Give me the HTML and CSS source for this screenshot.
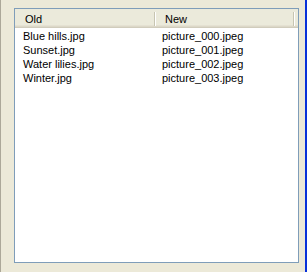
FILE: index.html
```html
<!DOCTYPE html>
<html>
<head>
<meta charset="utf-8">
<link rel="stylesheet" href="styles.css">
</head>
<body>
<div class="window">
  <div class="edge"></div>
  <div class="content">
    <div class="list">
      <div class="header">
        <div class="hcell col-old">Old</div>
        <span class="sep"></span>
        <div class="hcell col-new">New</div>
        <span class="sep"></span>
        <div class="hfill"></div>
      </div>
      <div class="rows">
        <div class="row"><span class="cell col-old">Blue hills.jpg</span><span class="cell col-new">picture_000.jpeg</span></div>
        <div class="row"><span class="cell col-old">Sunset.jpg</span><span class="cell col-new">picture_001.jpeg</span></div>
        <div class="row"><span class="cell col-old">Water lilies.jpg</span><span class="cell col-new">picture_002.jpeg</span></div>
        <div class="row"><span class="cell col-old">Winter.jpg</span><span class="cell col-new">picture_003.jpeg</span></div>
      </div>
    </div>
  </div>
  <div class="frame"></div>
</div>
</body>
</html>
```
FILE: styles.css
```css
html, body {
  margin: 0;
  padding: 0;
  width: 307px;
  height: 272px;
  overflow: hidden;
  background: #ece9d8;
  font-family: "Liberation Sans", Arial, sans-serif;
  font-size: 11px;
  color: #000;
}
.window {
  display: flex;
  width: 307px;
  height: 272px;
}
.edge {
  width: 1px;
  background: #aca899;
  flex: none;
}
.content {
  flex: 1;
  padding: 8px 6px 0 13px;
}
.frame {
  width: 2px;
  background: #0831d9;
  flex: none;
}
.list {
  width: 283px;
  height: 253px;
  border: 1px solid #7f9db9;
  background: #fff;
  display: flex;
  flex-direction: column;
}
.header {
  display: flex;
  height: 18px;
  background: #ebeadb;
  border-bottom: 1px solid #d0ccbc;
  box-shadow: inset 0 -1px 0 #dcd8c8, inset 0 -2px 0 #e4e1d2;
  flex: none;
}
.hcell {
  padding: 4px 0 0 10px;
  line-height: 13px;
  box-sizing: border-box;
}
.header .col-old { width: 139px; }
.header .col-new { width: 137px; padding-left: 9px; }
.sep {
  width: 1px;
  height: 14px;
  margin-top: 3px;
  background: #c7c5b2;
  border-right: 1px solid #fff;
  flex: none;
}
.hfill { flex: 1; }
.rows {
  padding-top: 1px;
}
.row {
  display: flex;
  height: 14px;
  line-height: 14px;
}
.cell {
  padding-left: 8px;
  white-space: nowrap;
}
.row .col-old { width: 139px; box-sizing: border-box; }
.row .col-new { width: 139px; box-sizing: border-box; }
```
